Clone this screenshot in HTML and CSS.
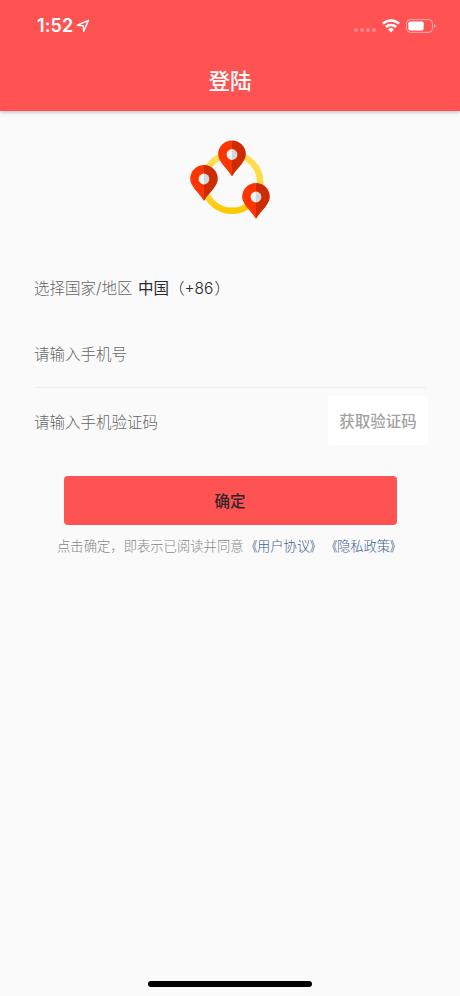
FILE: index.html
```html
<!DOCTYPE html>
<html lang="zh-CN">
<head>
<meta charset="utf-8">
<title>登陆</title>
<link rel="stylesheet" href="styles.css">
</head>
<body>
<div class="screen">
  <header class="header">
    <div class="status">
      <div class="status-left">
        <span class="time">1:52</span>
        <svg class="location" width="14" height="14" viewBox="0 0 14 14"><path d="M1.4 6.3 L12.4 1.4 L7.7 12.2 L7.2 6.8 Z" fill="none" stroke="#fff" stroke-width="1.5" stroke-linejoin="round"/></svg>
      </div>
      <div class="status-right">
        <span class="dots"><i></i><i></i><i></i><i></i></span>
        <svg class="wifi" width="18" height="14" viewBox="0 0 18 14"><g fill="none" stroke="#fff" stroke-width="2.5"><path d="M.9 4.7A11.6 11.6 0 0 1 17.1 4.7"/><path d="M3.9 8A7.3 7.3 0 0 1 14.1 8"/></g><path d="M9 13.4 L6.1 10.5 A4.1 4.1 0 0 1 11.9 10.5 Z" fill="#fff"/></svg>
        <svg class="battery" width="30" height="14" viewBox="0 0 30 14"><rect x=".5" y=".6" width="26" height="12.8" rx="3.8" fill="none" stroke="#fff" stroke-opacity=".5"/><rect x="2.3" y="2.4" width="15.4" height="9.2" rx="1.8" fill="#fff"/><path d="M28 5 Q29.7 5.6 29.7 7 Q29.7 8.4 28 9Z" fill="#fff" fill-opacity=".55"/></svg>
      </div>
    </div>
    <h1 class="title">登陆</h1>
  </header>
  <main class="main">
    <svg class="logo" width="82" height="82" viewBox="0 0 82 82">
      <defs>
        <linearGradient id="ring" x1="0" y1="0" x2="0" y2="1"><stop offset="0" stop-color="#ffdf59"/><stop offset=".65" stop-color="#ffd83c"/><stop offset="1" stop-color="#fcc800"/></linearGradient>
        <g id="pin">
          <path d="M0-14 A13.8 13.8 0 0 0-13.8-.2 C-13.8 7.4-6 12.5 0 22 Z" fill="#ff3500"/>
          <path d="M0-14 A13.8 13.8 0 0 1 13.8-.2 C13.8 7.4 6 12.5 0 22 Z" fill="#cf2b00"/>
          <path d="M0-5.4 A5.4 5.4 0 0 0 0 5.4Z" fill="#f4f6f8"/>
          <path d="M0-5.4 A5.4 5.4 0 0 1 0 5.4Z" fill="#d4d8dc"/>
        </g>
      </defs>
      <circle cx="43" cy="42.5" r="28.3" fill="none" stroke="url(#ring)" stroke-width="6.4"/>
      <use href="#pin" x="43" y="14.5"/>
      <use href="#pin" x="15" y="39"/>
      <use href="#pin" x="67" y="57"/>
    </svg>
    <div class="row country"><span>选择国家/地区</span><span class="country-value">中国<span class="code">（<span class="digits">+86</span>）</span></span></div>
    <div class="row phone">请输入手机号</div>
    <div class="row verify"><span>请输入手机验证码</span><button class="get-code">获取验证码</button></div>
    <button class="submit">确定</button>
    <p class="terms">点击确定，即表示已阅读并同意<a><b class="open">《</b>用户协议<b class="close">》</b></a><a><b class="open">《</b>隐私政策<b class="close">》</b></a></p>
  </main>
  <div class="home-indicator"></div>
</div>
</body>
</html>
```
FILE: styles.css
```css
* { box-sizing: border-box; }
body {
  margin: 0;
  background: #fafafa;
  font-family: Inter, "Noto Sans CJK SC", sans-serif;
  text-spacing-trim: space-all;
}
button { font-family: inherit; border: 0; padding: 0; }
.screen { width: 460px; height: 996px; display: flex; flex-direction: column; }
.header {
  height: 111px;
  background: #ff5252;
  color: #fff;
  box-shadow: 0 1px 4px rgba(60, 80, 110, .4);
}
.status {
  height: 51px;
  padding: 0 24px 0 37px;
  display: flex;
  align-items: center;
  justify-content: space-between;
}
.status-left, .status-right { display: flex; align-items: center; }
.time { font-size: 18px; font-weight: 600; line-height: 24px; letter-spacing: .1px; }
.location { margin-left: 3px; }
.dots { display: flex; gap: 2px; margin: 9px 6px 0 0; }
.dots i { width: 4px; height: 4px; border-radius: 50%; background: rgba(255, 255, 255, .3); }
.wifi { margin-right: 6px; }
.title { margin: 0; height: 60px; line-height: 60px; font-size: 21.5px; font-weight: 500; text-align: center; }
.main { flex: 1; padding: 29px 32px 0 34px; display: flex; flex-direction: column; }
.logo { margin-left: 155px; flex: none; }
.row { display: flex; align-items: center; font-size: 15.5px; font-weight: 300; color: #666; white-space: nowrap; flex: none; }
.country { margin-top: 40px; height: 50px; }
.country-value { margin-left: 5.5px; color: #2a2a2a; font-weight: 400; }
.code { font-weight: 300; }
.digits { font-size: 15.5px; margin-right: 1px; }
.phone { margin-top: 7px; height: 69px; padding-bottom: 2px; position: relative; }
.phone::after { content: ""; position: absolute; left: 2px; right: 2px; bottom: 0; height: 1px; background: #ededed; }
.verify { height: 66px; justify-content: space-between; padding-bottom: 1px; }
.get-code { width: 100px; height: 49px; padding-bottom: 1px; border-radius: 3px; background: #fff; color: #a3a3a3; font-size: 15.5px; font-weight: 500; }
.submit {
  flex: none;
  width: 333px;
  height: 49px;
  margin: 22px 0 0 29.5px;
  padding-bottom: 2px;
  border-radius: 4px;
  background: #ff5252;
  color: #30262a;
  font-size: 15.5px;
  font-weight: 500;
}
.terms { margin: 9px -20px 0 23px; line-height: 24px; font-size: 13.33px; font-weight: 300; color: #888; white-space: nowrap; }
.terms a { color: #3e6391; }
.terms b { display: inline-block; font-weight: 400; }
.open { transform: scaleX(.75); transform-origin: right; }
.close { transform: scaleX(.75); transform-origin: left; }
.home-indicator { width: 164px; height: 6px; margin: 0 auto 9px; border-radius: 3px; background: #000; }
```
